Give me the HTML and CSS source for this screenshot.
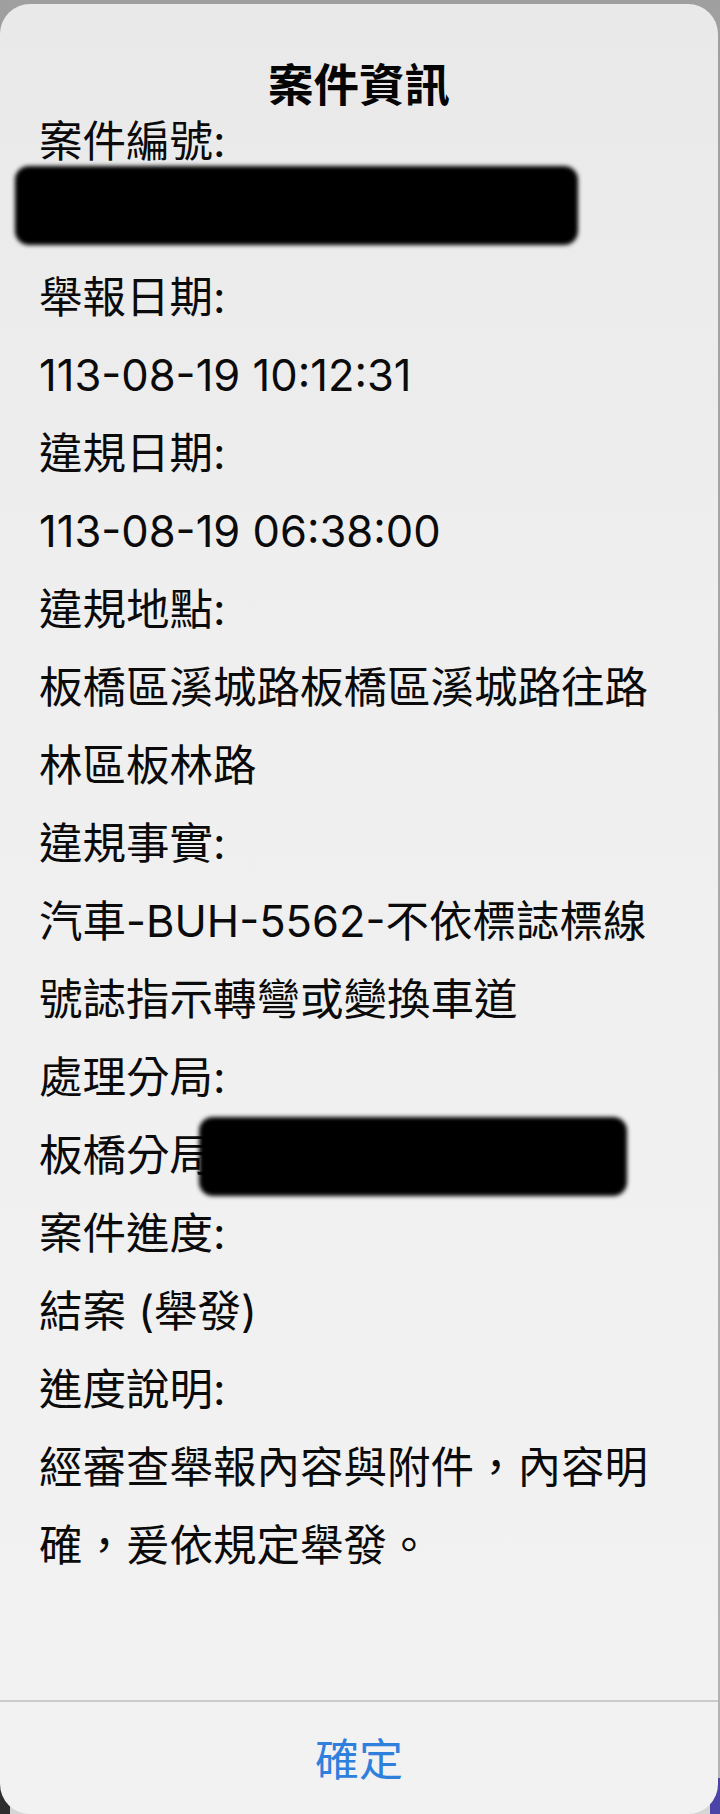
FILE: index.html
```html
<!DOCTYPE html>
<html lang="zh-Hant">
<head>
<meta charset="utf-8">
<title>案件資訊</title>
<link rel="stylesheet" href="styles.css">
</head>
<body>
<div class="screen">
  <div class="alert">
    <h1 class="alert-title">案件資訊</h1>
    <div class="alert-message">
      <p class="line">案件編號:</p>
      <p class="line"><span class="redact redact-id"></span>&nbsp;</p>
      <p class="line">舉報日期:</p>
      <p class="line">113-08-19 10:12:31</p>
      <p class="line">違規日期:</p>
      <p class="line">113-08-19 06:38:00</p>
      <p class="line">違規地點:</p>
      <p class="line">板橋區溪城路板橋區溪城路往路林區板林路</p>
      <p class="line">違規事實:</p>
      <p class="line">汽車-BUH-5562-不依標誌標線號誌指示轉彎或變換車道</p>
      <p class="line">處理分局:</p>
      <p class="line">板橋分局<span class="redact redact-unit"></span></p>
      <p class="line">案件進度:</p>
      <p class="line">結案 (舉發)</p>
      <p class="line">進度說明:</p>
      <p class="line">經審查舉報內容與附件，內容明確，爰依規定舉發。</p>
    </div>
    <div class="alert-actions">
      <button class="alert-button" type="button">確定</button>
    </div>
  </div>
</div>
</body>
</html>
```
FILE: styles.css
```css
html, body {
  margin: 0;
  padding: 0;
  height: 1814px;
  overflow: hidden;
}

body {
  background: #a3a3a3;
  font-family: Inter, "Noto Sans CJK TC", sans-serif;
  color: #0b0b0b;
}

.screen {
  box-sizing: border-box;
  height: 1814px;
  padding: 4px 2px 0 0;
  background:
    linear-gradient(to right, #2e2e2e 0, #2e2e2e 10px, #d6d6d6 10px, #d6d6d6 calc(100% - 10px), #4c44a6 calc(100% - 10px)) left bottom / 100% 36px no-repeat,
    linear-gradient(to bottom, #9f9f9f, #b4b4b4);
}

.alert {
  box-sizing: border-box;
  height: 100%;
  display: flex;
  flex-direction: column;
  border-radius: 30px;
  background: linear-gradient(to bottom, #e9e9ea 0, #efeff0 35%, #f2f2f3 100%);
  overflow: hidden;
}

.alert-title {
  margin: 0;
  padding-top: 65px;
  font-size: 45.5px;
  font-weight: 700;
  line-height: 33px;
  text-align: center;
  color: #050505;
}

.alert-message {
  flex: 1;
  padding: 0 54px 0 39px;
  font-size: 43.5px;
  line-height: 78px;
}

.line {
  margin: 0;
  position: relative;
}

.redact {
  position: absolute;
  background: #000;
  border-radius: 14px;
  filter: blur(2px);
}

.redact-id {
  left: -24px;
  top: -14px;
  width: 563px;
  height: 79px;
}

.redact-unit {
  left: 160px;
  top: 1px;
  width: 428px;
  height: 79px;
}

.alert-actions {
  height: 112px;
  flex: none;
  border-top: 2px solid #cbcbcd;
  display: flex;
  justify-content: center;
  align-items: center;
}

.alert-button {
  margin: 0;
  padding: 4px 0 0;
  border: 0;
  background: none;
  font-family: inherit;
  font-size: 44px;
  line-height: 108px;
  color: #2f80dc;
}
```
